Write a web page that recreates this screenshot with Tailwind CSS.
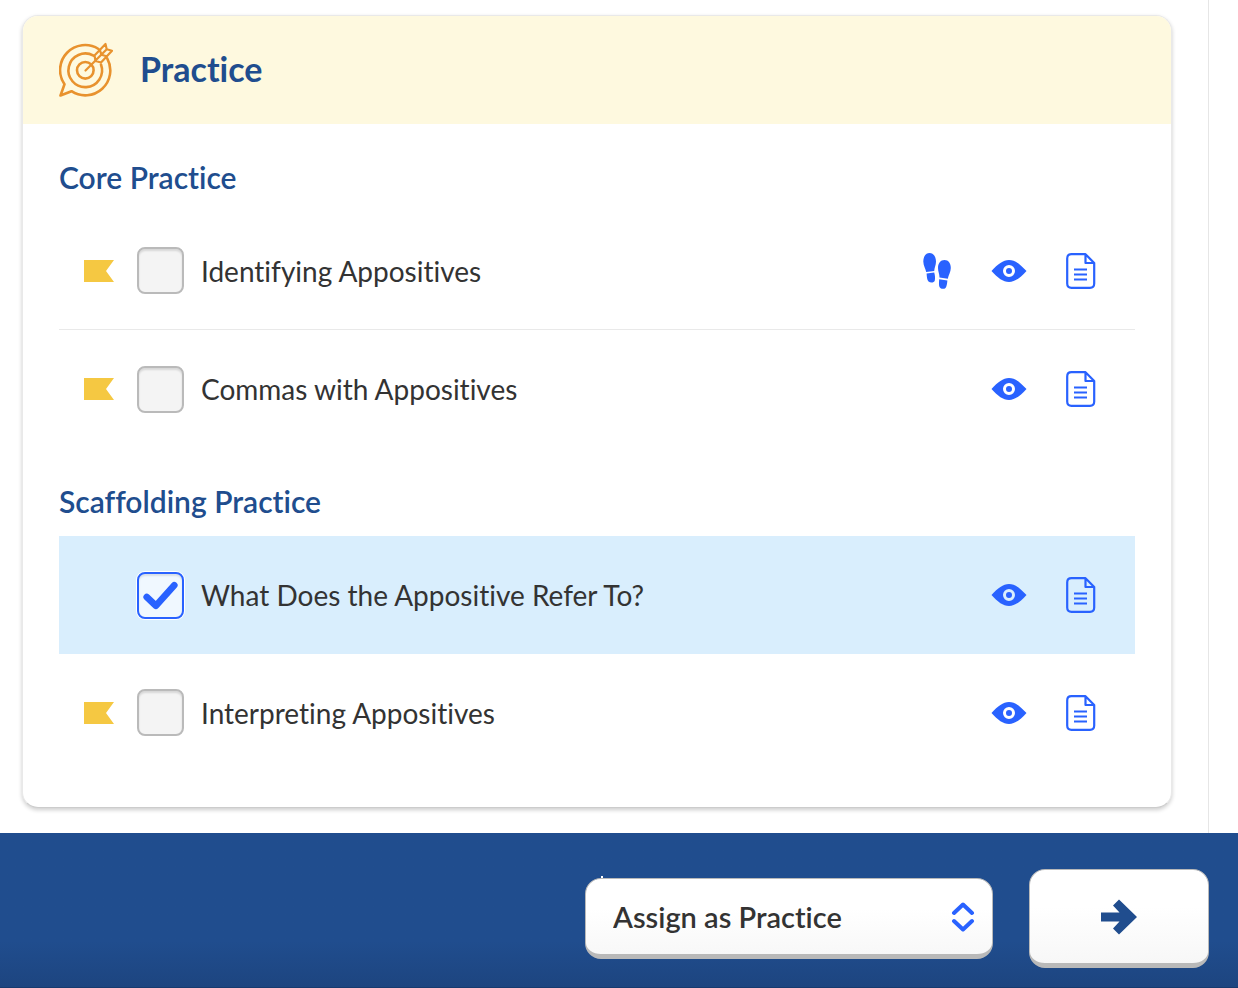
<!DOCTYPE html>
<html lang="en">
<head>
    <meta charset="UTF-8" />
    <meta name="viewport" content="width=device-width, initial-scale=1.0"/>
    <title>Practice</title>
    <!-- Tailwind CSS via CDN -->
    <script src="https://cdn.jsdelivr.net/npm/@tailwindcss/browser@4"></script>
</head>
<body class="bg-white text-[#333333] font-[Lato,sans-serif] [font-variant-ligatures:none] min-h-screen flex flex-col">

<!-- Shared icons -->
<svg class="hidden" aria-hidden="true">
    <symbol id="flag" viewBox="0 0 30 22">
        <path d="M0 0H30L22 11L30 22H0Z" fill="#f5c842"/>
    </symbol>
    <symbol id="eye" viewBox="0 0 36 24">
        <path fill="#2962ff" fill-rule="evenodd" d="M.5 12C7 5 12 1 18 1S29 5 35.500 12C29 19 24 23 18 23S7 19 .5 12ZM18 6A6 6 0 1 0 18 18A6 6 0 1 0 18 6ZM18 9A3 3 0 1 1 18 15A3 3 0 1 1 18 9Z"/>
    </symbol>
    <symbol id="doc" viewBox="0 0 30 36">
        <path d="M5.500 1.200H19.500L28.200 10V30.500Q28.200 34.800 24 34.800H5.500Q1.200 34.800 1.200 30.500V5.500Q1.200 1.200 5.500 1.200ZM19.500 1.500V10H28" fill="none" stroke="#2962ff" stroke-width="2.200" stroke-linejoin="round"/>
        <path d="M8 16.500H21M8 21.500H21M8 26.500H21" stroke="#2962ff" stroke-width="2"/>
    </symbol>
    <symbol id="steps" viewBox="0 0 28 36">
        <g fill="#2962ff">
            <path d="M6.500 0C10.500 0 13 4 13 8.500C13 12 11.500 14.500 11.200 18L3.200 19C2.800 16 .3 12.500 .3 8.500C.3 4 2.500 0 6.500 0Z"/>
            <path d="M3.600 20.500L11.200 19.500C12 22 12.300 25 11.800 27.500C11 30 7.500 30.200 5.500 28.500C4 27 3.800 23.500 3.600 20.500Z"/>
            <path d="M21.500 7C25.500 7 27.800 10.500 27.800 15C27.800 19 25.500 22 24.800 25.800L16.500 24.500C16.500 21 15 18.500 15 15C15 10.500 17.500 7 21.500 7Z"/>
            <path d="M16.200 26.200L24.400 27.500C24 31 23.700 33.500 22.500 35C21 36.500 17.500 36 16.500 34C15.700 32 16 29 16.200 26.200Z"/>
        </g>
    </symbol>
</svg>

<main class="flex-1 mr-[29px] border-r border-[#e6e6e6] pt-[15px] pb-6 pl-[22px] pr-9">
    <section class="rounded-2xl border border-[#e9e9e9] border-b-[#cccccc] shadow-[0_2px_4px_rgba(0,0,0,0.2)] overflow-hidden bg-white">
        <header class="flex items-center gap-[25px] h-[108px] px-9 bg-[#fef9df]">
            <svg class="w-14 h-14" viewBox="0 0 56 56" fill="none" stroke="#e8922e" stroke-width="2.600" stroke-linejoin="round" stroke-linecap="round" aria-hidden="true">
                <path d="M39.500 7A25 25 0 0 0 5.500 42.300L1.500 53.500L12.500 49.200A25 25 0 0 0 48.200 16.300"/>
                <path d="M34.500 13.700A16.800 16.800 0 1 0 42 22.500"/>
                <circle cx="26.300" cy="28.300" r="8.300"/>
                <path stroke-width="2.200" d="M26.500 28.500L47.500 7.500M35.500 13.500L46.500 2L47.700 7.300L53 8.700L42 20.500L36.500 19L35.500 13.500M41 8L42.300 12.700M42.500 12.700L47.500 14.300"/>
            </svg>
            <h1 class="text-[34px] leading-9 pb-[2px] font-bold text-[#204d8e]">Practice</h1>
        </header>

        <div class="px-9 pb-9">
            <h2 class="pt-[35px] pb-[17px] text-[30px] leading-9 font-semibold text-[#204d8e]">Core Practice</h2>
            <ul>
                <li class="flex items-center h-[118px] pl-[25px] pr-[18px] border-b border-[#e9e9e9]">
                    <svg class="w-[30px] h-[22px] mr-[23px]" aria-hidden="true"><use href="#flag"/></svg>
                    <input type="checkbox" id="identifying" class="appearance-none size-[47px] mr-[17px] rounded-lg border-2 border-[#bababa] bg-[#f4f4f4] shadow-[inset_0_2px_2px_rgba(0,0,0,0.12)]">
                    <label for="identifying" class="flex-1 text-[28px] leading-9">Identifying Appositives</label>
                    <button type="button" aria-label="Step by step" class="w-[72px] grid place-items-center"><svg class="w-7 h-9"><use href="#steps"/></svg></button>
                    <button type="button" aria-label="Preview" class="w-[72px] grid place-items-center"><svg class="w-9 h-6"><use href="#eye"/></svg></button>
                    <button type="button" aria-label="Document" class="w-[72px] grid place-items-center"><svg class="w-[30px] h-9"><use href="#doc"/></svg></button>
                </li>
                <li class="flex items-center h-[118px] pl-[25px] pr-[18px]">
                    <svg class="w-[30px] h-[22px] mr-[23px]" aria-hidden="true"><use href="#flag"/></svg>
                    <input type="checkbox" id="commas" class="appearance-none size-[47px] mr-[17px] rounded-lg border-2 border-[#bababa] bg-[#f4f4f4] shadow-[inset_0_2px_2px_rgba(0,0,0,0.12)]">
                    <label for="commas" class="flex-1 text-[28px] leading-9">Commas with Appositives</label>
                    <button type="button" aria-label="Preview" class="w-[72px] grid place-items-center"><svg class="w-9 h-6"><use href="#eye"/></svg></button>
                    <button type="button" aria-label="Document" class="w-[72px] grid place-items-center"><svg class="w-[30px] h-9"><use href="#doc"/></svg></button>
                </li>
            </ul>

            <h2 class="pt-[35px] pb-[17px] text-[30px] leading-9 font-semibold text-[#204d8e]">Scaffolding Practice</h2>
            <ul>
                <li class="flex items-center h-[118px] pl-[78px] pr-[18px] bg-[#d9eefd]">
                    <div class="relative mr-[17px] size-[47px]">
                        <input type="checkbox" id="refer" checked class="peer block appearance-none size-[47px] rounded-lg border-2 border-[#2962ff] bg-[#f0f8ff] shadow-[inset_0_2px_2px_rgba(0,0,0,0.1),0_0_0_1px_#ffffff]">
                        <svg class="absolute inset-0 size-[47px] pointer-events-none invisible peer-checked:visible" viewBox="0 0 46 46" fill="none" stroke="#2962ff" stroke-width="6.500" stroke-linecap="round" stroke-linejoin="round" aria-hidden="true">
                            <path d="M9.500 24.500L18.500 33L36.500 13"/>
                        </svg>
                    </div>
                    <label for="refer" class="flex-1 text-[28px] leading-9">What Does the Appositive Refer To?</label>
                    <button type="button" aria-label="Preview" class="w-[72px] grid place-items-center"><svg class="w-9 h-6"><use href="#eye"/></svg></button>
                    <button type="button" aria-label="Document" class="w-[72px] grid place-items-center"><svg class="w-[30px] h-9"><use href="#doc"/></svg></button>
                </li>
                <li class="flex items-center h-[117px] pl-[25px] pr-[18px]">
                    <svg class="w-[30px] h-[22px] mr-[23px]" aria-hidden="true"><use href="#flag"/></svg>
                    <input type="checkbox" id="interpreting" class="appearance-none size-[47px] mr-[17px] rounded-lg border-2 border-[#bababa] bg-[#f4f4f4] shadow-[inset_0_2px_2px_rgba(0,0,0,0.12)]">
                    <label for="interpreting" class="flex-1 text-[28px] leading-9">Interpreting Appositives</label>
                    <button type="button" aria-label="Preview" class="w-[72px] grid place-items-center"><svg class="w-9 h-6"><use href="#eye"/></svg></button>
                    <button type="button" aria-label="Document" class="w-[72px] grid place-items-center"><svg class="w-[30px] h-9"><use href="#doc"/></svg></button>
                </li>
            </ul>
        </div>
    </section>
</main>

<!-- Action bar -->
<footer class="flex items-center justify-end gap-9 pt-9 pb-[19px] pl-9 pr-[29px] bg-linear-to-b from-[#204d8e] from-70% to-[#1d4580] border-b border-[#173a6e]">
    <div class="relative w-[408px]">
        <span class="absolute -top-[2px] left-4 w-[2px] h-1 bg-white"></span>
        <select aria-label="Assign as" class="relative block w-full h-[81px] appearance-none rounded-2xl border border-b-[5px] border-[#b9b9b9] bg-linear-to-b from-white from-40% to-[#f8f8f8] pl-[27px] pr-14 text-[29px] font-semibold text-[#333333]">
            <option>Assign as Practice</option>
        </select>
        <svg class="absolute right-[18px] top-6 w-6 h-[30px] pointer-events-none" viewBox="0 0 24 30" fill="none" stroke="#2962ff" stroke-width="4" stroke-linecap="round" stroke-linejoin="round" aria-hidden="true">
            <path d="M3 11L12 2.500L21 11M3 19L12 27.500L21 19"/>
        </svg>
    </div>
    <button type="button" aria-label="Next" class="grid place-items-center w-[180px] h-[99px] rounded-2xl border border-b-[5px] border-[#b9b9b9] bg-linear-to-b from-white from-40% to-[#f7f7f7]">
        <svg class="w-9 h-9" viewBox="0 0 36 36" fill="#204d8e" aria-hidden="true">
            <path d="M0 13.500H18.500L12 6.500L18 .5L36 18L18 35.500L12 29.500L18.500 22.500H0Z"/>
        </svg>
    </button>
</footer>
</body>
</html>
